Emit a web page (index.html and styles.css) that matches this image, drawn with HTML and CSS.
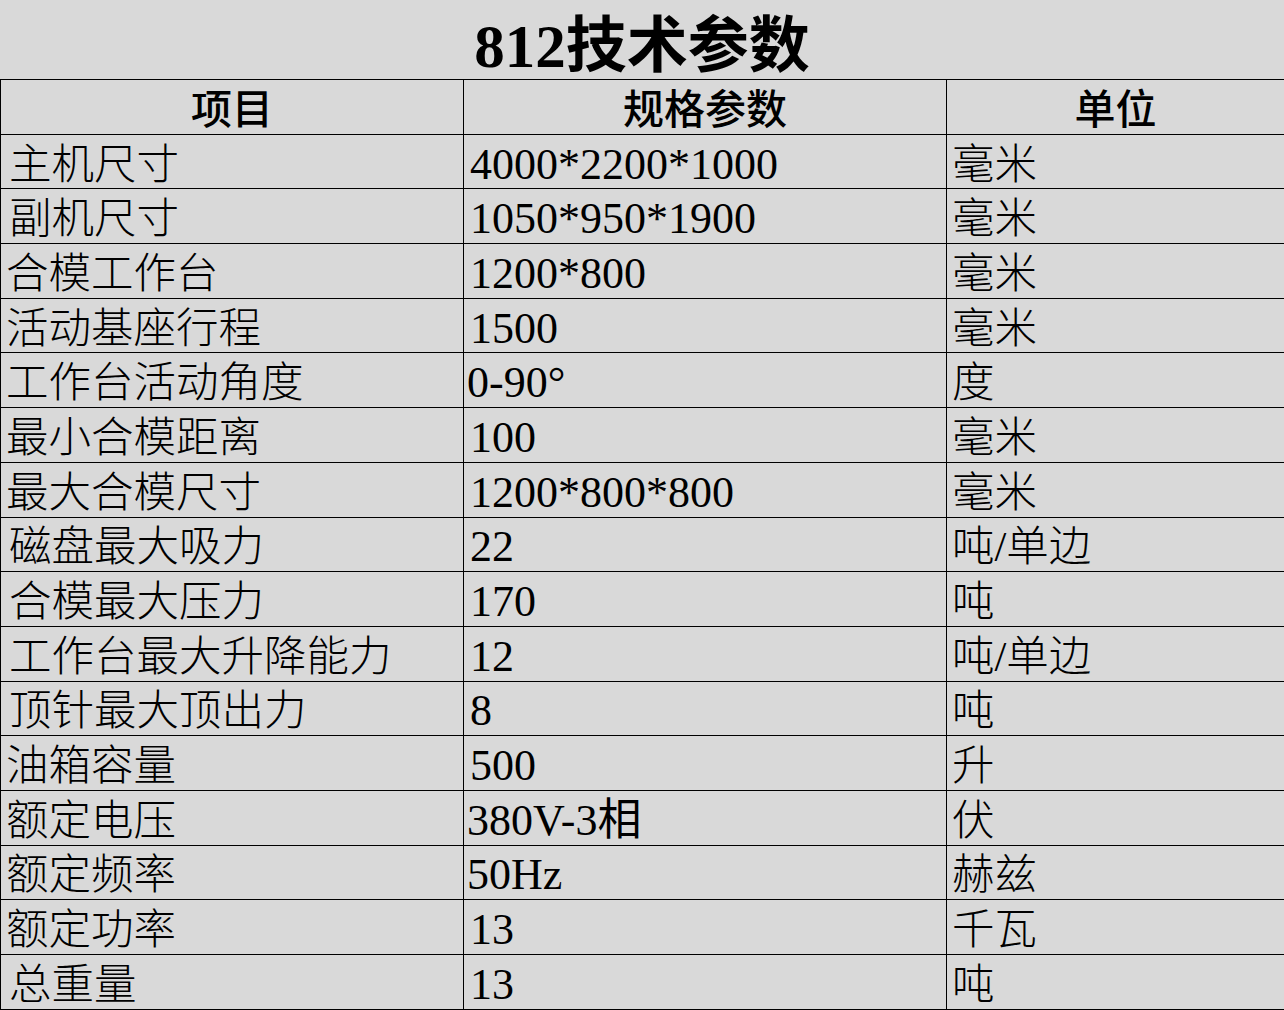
FILE: index.html
```html
<!DOCTYPE html>
<html lang="zh-CN">
<head>
<meta charset="utf-8">
<title>812技术参数</title>
<link rel="stylesheet" href="styles.css">
</head>
<body>
<div class="sheet">
  <h1 class="title">812技术参数</h1>
  <table class="spec">
    <colgroup>
      <col class="c1"><col class="c2"><col class="c3">
    </colgroup>
    <thead>
      <tr><th>项目</th><th>规格参数</th><th>单位</th></tr>
    </thead>
    <tbody>
      <tr><td class="in">主机尺寸</td><td class="num">4000*2200*1000</td><td>毫米</td></tr>
      <tr><td class="in">副机尺寸</td><td class="num">1050*950*1900</td><td>毫米</td></tr>
      <tr><td>合模工作台</td><td class="num">1200*800</td><td>毫米</td></tr>
      <tr><td>活动基座行程</td><td class="num">1500</td><td>毫米</td></tr>
      <tr><td>工作台活动角度</td><td class="num tight">0-90°</td><td>度</td></tr>
      <tr><td>最小合模距离</td><td class="num">100</td><td>毫米</td></tr>
      <tr><td>最大合模尺寸</td><td class="num">1200*800*800</td><td>毫米</td></tr>
      <tr><td class="in">磁盘最大吸力</td><td class="num">22</td><td>吨/单边</td></tr>
      <tr><td class="in">合模最大压力</td><td class="num">170</td><td>吨</td></tr>
      <tr><td class="in">工作台最大升降能力</td><td class="num">12</td><td>吨/单边</td></tr>
      <tr><td class="in">顶针最大顶出力</td><td class="num">8</td><td>吨</td></tr>
      <tr><td>油箱容量</td><td class="num">500</td><td>升</td></tr>
      <tr><td>额定电压</td><td class="num tight">380V-3相</td><td>伏</td></tr>
      <tr><td>额定频率</td><td class="num tight">50Hz</td><td>赫兹</td></tr>
      <tr><td>额定功率</td><td class="num">13</td><td>千瓦</td></tr>
      <tr><td class="in">总重量</td><td class="num">13</td><td>吨</td></tr>
    </tbody>
  </table>
</div>
</body>
</html>
```
FILE: styles.css
```css
html, body {
  margin: 0;
  padding: 0;
  background: #d9d9d9;
}

.sheet {
  width: 1284px;
  background: #d9d9d9;
  font-family: "Liberation Serif", "Noto Sans CJK SC", serif;
  color: #000;
}

.title {
  margin: 0;
  height: 79px;
  box-sizing: border-box;
  padding-top: 14px;
  text-align: center;
  font-size: 61px;
  line-height: 66px;
  font-weight: 700;
  overflow: hidden;
}

.spec {
  width: 1284px;
  border-collapse: collapse;
  table-layout: fixed;
}

.c1 { width: 463px; }
.c2 { width: 483px; }
.c3 { width: 338px; }

.spec th,
.spec td {
  border: 1px solid #000;
  height: 54.7px;
  padding: 6px 4px 0 5px;
  box-sizing: border-box;
  font-size: 42.5px;
  line-height: 46px;
  white-space: nowrap;
  text-align: left;
  vertical-align: middle;
  font-weight: 300;
}

.spec th {
  text-align: center;
  font-weight: 500;
  font-size: 41px;
  padding-left: 0;
  padding-right: 0;
}

.spec td.in { padding-left: 8px; }
.spec td.num { padding-left: 6px; font-size: 44px; font-weight: 400; }
.spec td.num.tight { padding-left: 3px; }
```
